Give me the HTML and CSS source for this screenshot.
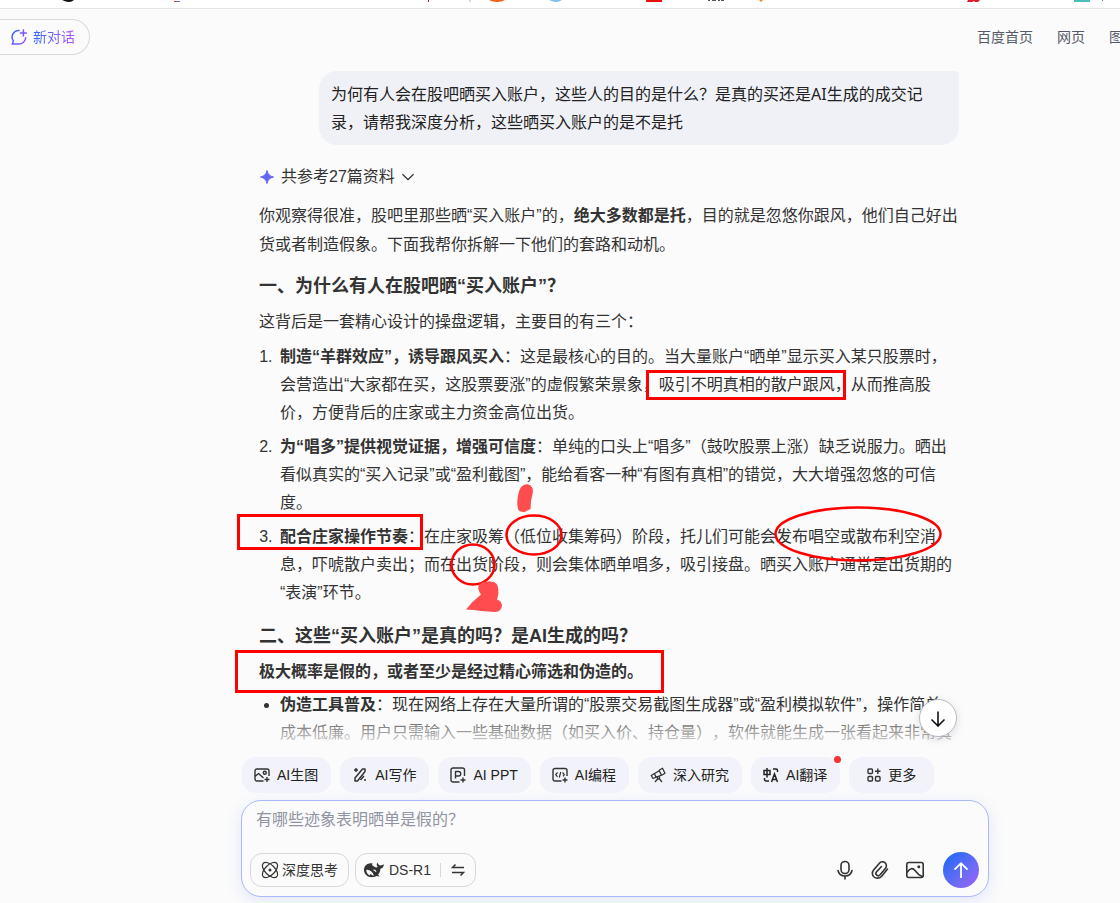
FILE: index.html
```
<!DOCTYPE html>
<html lang="zh-CN">
<head>
    <meta charset="UTF-8">
    <title>AI对话</title>
    <link rel="stylesheet" href="styles.css">
</head>
<body>
<div class="app">
    <div class="bookmarks">
        <svg width="1120" height="8" viewBox="0 0 1120 8">
            <path d="M62 0h12q-2 2-5 2t-7-2z" fill="#111"/>
            <path d="M174 1h3v1h-3z" fill="#e33"/>
            <path d="M177 1h3v1h-3z" fill="#38f"/>
            <path d="M428 0h1v2h-1z" fill="#8b2a1a"/>
            <path d="M469 0h2v2h-2z" fill="#d5d9e0"/>
            <path d="M489 0h16q-3 2-8 2t-8-2z" fill="#f0611d"/>
            <path d="M549 0h13q-3 2-6 2t-7-2z" fill="#7fbfea"/>
            <path d="M646 0h16v2h-16z" fill="#e80f0f"/>
            <path d="M708 0h2v1h-2zM712 0h4v1h-4zM718 0h2v1h-2zM721 0h3v1h-3z" fill="#555"/>
            <path d="M759 0h4l-2 2z" fill="#f58220"/>
            <path d="M968 0h12l-2 2h-3l-1-1-2 1h-5z" fill="#e3172a"/>
            <path d="M1074 0h16v2h-16z" fill="#4dbfb8"/>
            <path d="M1102 0h1v1h-1z" fill="#777"/>
        </svg>
    </div>

    <header class="header">
        <button class="new-chat" type="button">
            <svg width="16" height="16" viewBox="0 0 16 16" fill="none" stroke="url(#grad-new)" stroke-width="1.5" stroke-linecap="round">
                <defs>
                    <linearGradient id="grad-new" gradientUnits="userSpaceOnUse" x1="0" y1="4" x2="16" y2="12">
                        <stop offset="0" stop-color="#2f6bff"/>
                        <stop offset="1" stop-color="#a34dff"/>
                    </linearGradient>
                </defs>
                <path d="M8 1.4A6.7 6.7 0 0 0 2.4 12L1.4 15H8A6.7 6.7 0 0 0 14.7 8.8"/>
                <path d="M12.4 1v6M9.4 4h6"/>
            </svg>
            <span>新对话</span>
        </button>
        <nav class="nav">
            <a href="#">百度首页</a>
            <a href="#">网页</a>
            <a href="#">图片</a>
        </nav>
    </header>

    <main class="thread">
        <div class="question">为何有人会在股吧晒买入账户，这些人的目的是什么？是真的买还是AI生成的成交记录，请帮我深度分析，这些晒买入账户的是不是托</div>

        <button class="sources" type="button">
            <svg width="14" height="14" viewBox="0 0 14 14">
                <path d="M7 .5Q8 6 13.5 7 8 8 7 13.5 6 8 .5 7 6 6 7 .5z" fill="#6366f1" stroke="#6366f1" stroke-linejoin="round"/>
            </svg>
            <span>共参考27篇资料</span>
            <svg width="12" height="8" viewBox="0 0 12 8" fill="none" stroke="#333" stroke-width="1.3">
                <path d="M.5 1.2L6 6.7l5.5-5.5"/>
            </svg>
        </button>

        <article class="answer">
            <p>你观察得很准，股吧里那些晒“买入账户”的，<strong>绝大多数都是托</strong>，目的就是忽悠你跟风，他们自己好出货或者制造假象。下面我帮你拆解一下他们的套路和动机。</p>
            <h3>一、为什么有人在股吧晒“买入账户”？</h3>
            <p>这背后是一套精心设计的操盘逻辑，主要目的有三个：</p>
            <ol>
                <li><strong>制造“羊群效应”，诱导跟风买入</strong>：这是最核心的目的。当大量账户“晒单”显示买入某只股票时，会营造出“大家都在买，这股票要涨”的虚假繁荣景象，吸引不明真相的散户跟风，从而推高股价，方便背后的庄家或主力资金高位出货。</li>
                <li><strong>为“唱多”提供视觉证据，增强可信度</strong>：单纯的口头上“唱多”（鼓吹股票上涨）缺乏说服力。晒出看似真实的“买入记录”或“盈利截图”，能给看客一种“有图有真相”的错觉，大大增强忽悠的可信度。</li>
                <li><strong>配合庄家操作节奏</strong>：在庄家吸筹（低位收集筹码）阶段，托儿们可能会发布唱空或散布利空消息，吓唬散户卖出；而在出货阶段，则会集体晒单唱多，吸引接盘。晒买入账户通常是出货期的“表演”环节。</li>
            </ol>
            <h3>二、这些“买入账户”是真的吗？是AI生成的吗？</h3>
            <p><strong>极大概率是假的，或者至少是经过精心筛选和伪造的。</strong></p>
            <ul>
                <li><strong>伪造工具普及</strong>：现在网络上存在大量所谓的“股票交易截图生成器”或“盈利模拟软件”，操作简单，成本低廉。用户只需输入一些基础数据（如买入价、持仓量），软件就能生成一张看起来非常真</li>
            </ul>
        </article>
    </main>

    <footer class="dock">
        <button class="to-bottom" type="button" aria-label="回到底部">
            <svg width="18" height="18" viewBox="0 0 18 18" fill="none" stroke="#111" stroke-width="1.6">
                <path d="M9 2.5v14M2.5 10.5L9 17l6.5-6.5"/>
            </svg>
        </button>

        <div class="tools">
            <button class="tool" type="button">
                <svg width="16" height="16" viewBox="0 0 16 16" fill="none" stroke="#333" stroke-width="1.4" stroke-linejoin="round">
                    <path d="M9.5 14H3a2 2 0 0 1-2-2V4a2 2 0 0 1 2-2h10a2 2 0 0 1 2 2v5M1 9.5l3.5-3 5 4.5"/>
                    <circle cx="10.8" cy="5.8" r="1.5"/>
                    <path d="M13 10v5M10.5 12.5h5"/>
                </svg>
                AI生图
            </button>
            <button class="tool" type="button">
                <svg width="16" height="16" viewBox="0 0 16 16" fill="none" stroke="#333" stroke-width="1.5" stroke-linejoin="round">
                    <path d="M3 14v-3l7.5-9h2.500v2.500L5.500 14z"/>
                    <path d="M2 3h4M4 1v4M8.500 13l3.500-4M12 13h2"/>
                </svg>
                AI写作
            </button>
            <button class="tool" type="button">
                <svg width="16" height="16" viewBox="0 0 16 16" fill="none" stroke="#333" stroke-width="1.4" stroke-linejoin="round">
                    <path d="M9.5 15H3a2 2 0 0 1-2-2V3a2 2 0 0 1 2-2h9.5a2 2 0 0 1 2 2v6"/>
                    <path d="M5.5 11.5v-7h3a2 2 0 0 1 0 4.5h-3M13 10.5v5M10.5 13h5"/>
                </svg>
                AI PPT
            </button>
            <button class="tool" type="button">
                <svg width="16" height="16" viewBox="0 0 16 16" fill="none" stroke="#333" stroke-width="1.4" stroke-linejoin="round">
                    <path d="M9.5 14H3a2 2 0 0 1-2-2V3.5a2 2 0 0 1 2-2h10a2 2 0 0 1 2 2V9M13 10.5v5M10.5 13h5"/>
                    <path d="M5.5 5.5L3.7 7.7l1.8 2.2M10.5 5.5l1.8 2.2-1.3 1.6M8.7 5l-1.4 5.5" stroke-width="1.2"/>
                </svg>
                AI编程
            </button>
            <button class="tool" type="button">
                <svg width="16" height="16" viewBox="0 0 16 16" fill="none" stroke="#333" stroke-width="1.3" stroke-linejoin="round">
                    <path d="M1.2 8.5l8-4.8 2.3 4.4L3 11.5zM9 3.2l3.5-1.9 2.5 5-3.3 1.9M4.5 6.7L6 10.2"/>
                    <circle cx="8.5" cy="10.8" r="1.2"/>
                    <path d="M7.8 11.8L5 15M9.2 11.8L12 15"/>
                </svg>
                深入研究
            </button>
            <button class="tool tool-new" type="button">
                <svg width="16" height="16" viewBox="0 0 16 16" fill="none" stroke="#222" stroke-width="1.5">
                    <path d="M1 3.5h6v4H1zM4 1v9.5M10 2h3a1.5 1.5 0 0 1 1.5 1.5V5M1.500 11v1.500A1.500 1.500 0 0 0 3 14h3M8.500 15l3-8 3 8M9.500 12.500h4"/>
                </svg>
                AI翻译
            </button>
            <button class="tool tool-more" type="button">
                <svg width="14" height="14" viewBox="0 0 14 14" fill="none" stroke="#333" stroke-width="1.4">
                    <rect x="1" y="1" width="4.5" height="4.5" rx="1"/>
                    <rect x="1" y="8.5" width="4.5" height="4.5" rx="1"/>
                    <rect x="8.5" y="8.5" width="4.5" height="4.5" rx="1"/>
                    <path d="M10.8.5V6M8 3.2h5.5"/>
                </svg>
                更多
            </button>
        </div>

        <form class="composer">
            <textarea class="composer-text" rows="1" aria-label="输入问题" placeholder="有哪些迹象表明晒单是假的？"></textarea>
            <div class="composer-bar">
                <button class="option" type="button">
                    <svg width="18" height="18" viewBox="0 0 18 18" fill="none" stroke="#333" stroke-width="1.2">
                        <ellipse cx="9" cy="9" rx="9.5" ry="5" transform="rotate(45 9 9)"/>
                        <ellipse cx="9" cy="9" rx="9.5" ry="5" transform="rotate(-45 9 9)"/>
                        <circle cx="9" cy="9" r="1.5" fill="#333" stroke="none"/>
                    </svg>
                    深度思考
                </button>
                <button class="option option-model" type="button">
                    <svg width="20" height="16" viewBox="0 0 20 16">
                        <path d="M8.5 1.5C4 .5 0 3.5 0 8c0 4 3.5 7.200 7.5 7.200 2 0 3.7-.4 5-1.200l3 .6c.3-.5-1-1-1.400-1.800 1.700-2 2.300-4 2.300-6 2-.4 3.300-1.800 3.500-4.600-1.400.9-2.200.6-3.200 1.400C15.300 3.500 14 2.500 13.500.5c-1.200 1.700-.8 3.300.3 4.500L12 5.500C10.500 5 9.500 4 8 3.300z" fill="#333"/>
                        <path d="M2.300 8C5 7.300 8.500 9.500 10 13.500c-1.500 0-2.700-.6-3.600-1.500l-.6 1.400C3.500 12.500 2.300 10.500 2.300 8z" fill="#fbfbfb"/>
                        <path d="M9.5 8.200q1.300-.7 2.500 1.500" fill="none" stroke="#fbfbfb" stroke-width="1.2"/>
                    </svg>
                    <span>DS-R1</span>
                    <i class="split"></i>
                    <svg width="14" height="12" viewBox="0 0 14 12" fill="none" stroke="#333" stroke-width="1.5">
                        <path d="M4.5.5l-3 3H13M9.5 11.5l3-3H1"/>
                    </svg>
                </button>
                <div class="actions">
                    <button class="action" type="button" aria-label="语音">
                        <svg width="20" height="20" viewBox="0 0 20 20" fill="none" stroke="#333" stroke-width="1.6" stroke-linecap="round">
                            <rect x="6" y="1.5" width="8" height="12" rx="4"/>
                            <path d="M3 10.5c.7 3.600 3.600 5.500 7 5.500s6.300-1.900 7-5.500M10 16v3"/>
                        </svg>
                    </button>
                    <button class="action" type="button" aria-label="附件">
                        <svg width="20" height="20" viewBox="0 0 20 20" fill="none" stroke="#333" stroke-width="1.6" stroke-linecap="round">
                            <path d="M17.5 9l-5.800 7.200c-2 2.400-5.700 2.400-7.700.8s-2.200-4.800-.4-7l5.600-6.600c1.500-1.800 4.200-2 5.800-.7s1.900 3.900.5 5.600l-5.400 6.500c-.9 1-2.400 1.200-3.400.4s-1.100-2.200-.3-3.200L11.500 6.500"/>
                        </svg>
                    </button>
                    <button class="action" type="button" aria-label="图片">
                        <svg width="20" height="20" viewBox="0 0 20 20" fill="none" stroke="#333" stroke-width="1.6" stroke-linejoin="round">
                            <rect x="1.8" y="2.5" width="16.4" height="15" rx="2"/>
                            <path d="M2 12.5q4.5-6.5 8-2 3 4.5 8 6.5"/>
                            <circle cx="13.8" cy="6.8" r="1.5" fill="#333" stroke="none"/>
                        </svg>
                    </button>
                </div>
                <button class="send" type="submit" aria-label="发送">
                    <svg width="18" height="18" viewBox="0 0 18 18" fill="none" stroke="#fff" stroke-width="1.8">
                        <path d="M9 17V2.5M2.5 8.7L9 2.2l6.5 6.5"/>
                    </svg>
                </button>
            </div>
        </form>
    </footer>

    <!-- red pen marks over the answer -->
    <svg class="marks" width="1120" height="903" viewBox="0 0 1120 903" fill="none" stroke="#f00" stroke-width="3">
        <rect x="647.5" y="371.5" width="197" height="27"/>
        <rect x="238.5" y="515.5" width="183" height="33"/>
        <rect x="236.5" y="651.5" width="426" height="40"/>
        <g stroke-width="2.5">
            <ellipse cx="534" cy="535" rx="27.5" ry="19.5"/>
            <ellipse cx="473" cy="564.5" rx="21.5" ry="20"/>
            <ellipse cx="858" cy="534" rx="82.5" ry="26.5"/>
        </g>
        <g fill="#ff4d4f" stroke="none">
            <path d="M523 485.5q3-2 7-.5 4 3 2.500 9l-1.500 7-.5 8q-4 2-6 3-5 .5-6.500-3-1.500-6 0-13 1-8 5-10.500z"/>
            <path d="M479 584q4-3 9-2.500 8-.5 9.500 4 2 7-.5 14 4.500 1.500 5 6-.5 6-7 6.500l-14-1q-7-1.500-15-1.500 6-8 15-15-4-5-2-10.500z"/>
        </g>
    </svg>
</div>
</body>
</html>
```
FILE: styles.css
```
* {
    box-sizing: border-box;
}

body {
    margin: 0;
    background-color: #fbfbfb;
    color: #333;
    font: 16px/28px "Liberation Sans", "Noto Sans CJK SC", sans-serif;
    text-spacing-trim: space-all;
}

button {
    font: inherit;
    color: inherit;
    background: none;
    border: 0;
    padding: 0;
    cursor: pointer;
}

svg {
    display: block;
    flex: none;
}

.app {
    position: relative;
    height: 100vh;
    display: flex;
    flex-direction: column;
    overflow: hidden;
}

.bookmarks {
    flex: none;
    height: 9px;
    background-color: #fff;
    border-bottom: 1px solid #e4e4e4;
    overflow: hidden;
}

/* header */
.header {
    flex: none;
    display: flex;
    align-items: center;
    justify-content: space-between;
    padding: 10px 0 16px;
    font-size: 14px;
}

.new-chat {
    display: flex;
    align-items: center;
    gap: 6px;
    height: 36px;
    padding: 0 14px 0 11px;
    border: 1px solid #d9d9dc;
    border-left: 0;
    border-radius: 0 18px 18px 0;
}

.new-chat span {
    background: linear-gradient(90deg, #2f6bff, #b455ff);
    -webkit-background-clip: text;
    background-clip: text;
    color: transparent;
}

.nav {
    flex: 0 0 143px;
    display: flex;
    gap: 24px;
    overflow: hidden;
    white-space: nowrap;
}

.nav a {
    color: #555a68;
    text-decoration: none;
}

/* conversation */
.thread {
    flex: 1;
    min-height: 0;
    max-width: 748px;
    margin-left: 241px;
    padding: 0 30px 0 18px;
    overflow: hidden;
}

.question {
    max-width: 640px;
    margin-left: auto;
    padding: 9px 12px;
    border-radius: 18px 4px 18px 18px;
    background-color: #f0f1f6;
    color: #222;
    font-family: "Noto Sans", "Noto Sans CJK SC", sans-serif;
}

.sources {
    display: flex;
    align-items: center;
    gap: 7px;
    margin-top: 18px;
    padding-left: 1px;
}

.answer p {
    margin: 7px 0 4px;
    line-height: 29px;
}

.answer p:first-child {
    margin: 10px 0 13px;
}

.answer h3 {
    margin: 0;
    font-size: 18px;
}

.answer ol {
    margin: 7px 0 15px;
    padding-left: 18px;
}

.answer ul {
    margin: 5px 0 15px;
    padding-left: 21px;
}

.answer li {
    margin-bottom: 6px;
}

.answer ol li {
    padding-left: 3px;
}

/* bottom dock */
.dock {
    position: relative;
    flex: none;
    max-width: 748px;
    margin-left: 241px;
    padding-bottom: 6px;
}

.dock::before {
    content: "";
    position: absolute;
    left: 0;
    right: 0;
    bottom: 100%;
    height: 46px;
    background: linear-gradient(rgba(251, 251, 251, 0), #fbfbfb 85%);
}

.to-bottom {
    position: absolute;
    right: 32px;
    bottom: calc(100% + 20px);
    width: 38px;
    height: 38px;
    display: flex;
    align-items: center;
    justify-content: center;
    border: 1px solid #b9bbc6;
    border-radius: 50%;
    background-color: #fff;
    box-shadow: 0 2px 10px rgba(0, 0, 0, .12);
}

.tools {
    display: flex;
    gap: 9px;
    margin-bottom: 7px;
    padding-left: 1px;
}

.tool {
    position: relative;
    display: flex;
    align-items: center;
    gap: 7px;
    height: 36px;
    padding: 0 13px 0 12px;
    border-radius: 14px;
    background-color: #f2f3fa;
    color: #222;
    font-size: 14px;
    white-space: nowrap;
}

.tool-more {
    padding: 0 18px;
}

.tool-new::after {
    content: "";
    position: absolute;
    top: -1px;
    right: -1px;
    width: 7px;
    height: 7px;
    border-radius: 50%;
    background-color: #f73131;
}

.composer {
    padding: 7px 9px 8px 8px;
    border: 1px solid #a9b9fb;
    border-radius: 20px;
    background-color: #fbfbfb;
    box-shadow: 0 4px 16px rgba(78, 110, 242, .14);
}

.composer-text {
    display: block;
    width: 100%;
    height: 24px;
    margin: 0 0 20px;
    padding: 0 6px;
    border: 0;
    outline: 0;
    resize: none;
    overflow: hidden;
    background: none;
    font: inherit;
    line-height: 24px;
}

.composer-text::placeholder {
    color: #9195a3;
}

.composer-bar {
    display: flex;
    align-items: center;
    gap: 6px;
}

.option {
    display: flex;
    align-items: center;
    gap: 3px;
    height: 34px;
    padding: 0 10px;
    border: 1px solid #d6d7dc;
    border-radius: 12px;
    font-size: 14px;
}

.option-model {
    gap: 5px;
    padding: 0 10px 0 8px;
}

.split {
    width: 1px;
    height: 14px;
    margin: 0 5px 0 4px;
    background-color: #d6d7dc;
}

.actions {
    display: flex;
    gap: 15px;
    margin-left: auto;
}

.send {
    display: flex;
    align-items: center;
    justify-content: center;
    width: 36px;
    height: 36px;
    margin-left: 12px;
    border-radius: 50%;
    background: linear-gradient(135deg, #2468f7 10%, #6a6cf5 60%, #a262f7);
}

.marks {
    position: absolute;
    top: 0;
    left: 0;
    pointer-events: none;
}
```
